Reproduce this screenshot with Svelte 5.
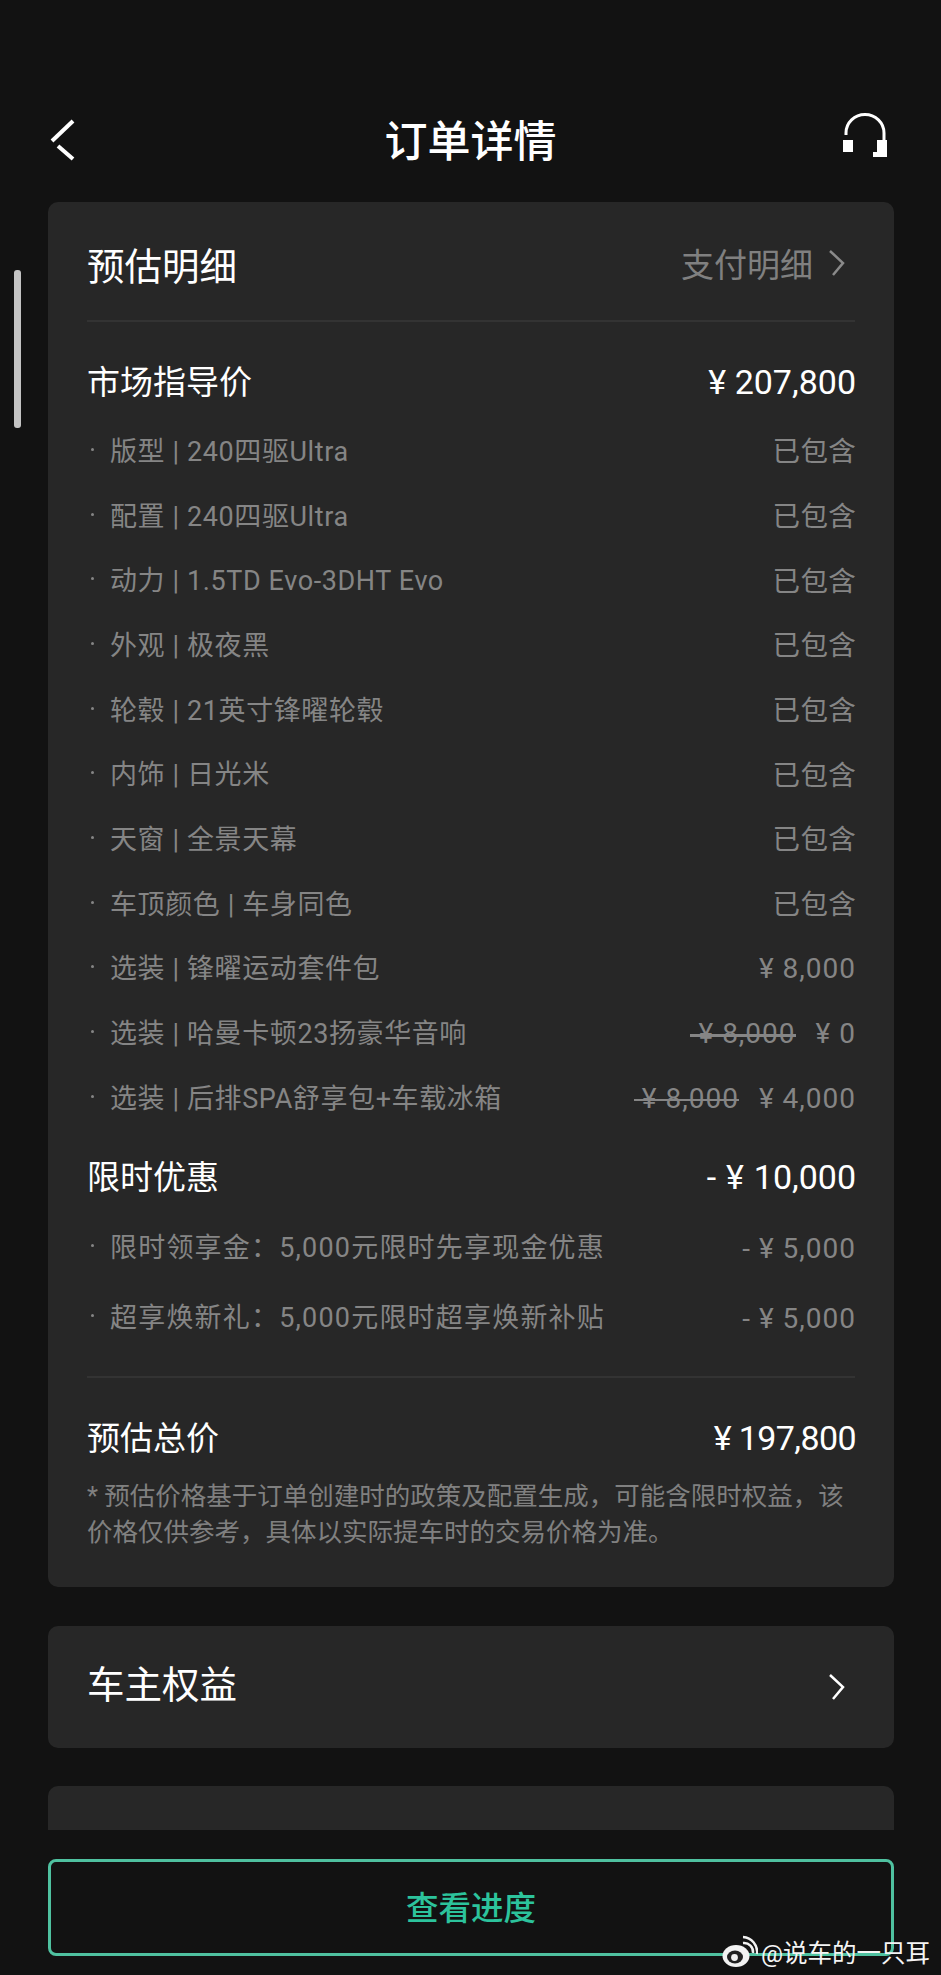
<script lang="ts">
  type Row = { label: string; old?: string; value: string };

  const specs: Row[] = [
    { label: '版型 | 240四驱Ultra', value: '已包含' },
    { label: '配置 | 240四驱Ultra', value: '已包含' },
    { label: '动力 | 1.5TD Evo-3DHT Evo', value: '已包含' },
    { label: '外观 | 极夜黑', value: '已包含' },
    { label: '轮毂 | 21英寸锋曜轮毂', value: '已包含' },
    { label: '内饰 | 日光米', value: '已包含' },
    { label: '天窗 | 全景天幕', value: '已包含' },
    { label: '车顶颜色 | 车身同色', value: '已包含' },
    { label: '选装 | 锋曜运动套件包', value: '¥ 8,000' },
    { label: '选装 | 哈曼卡顿23扬豪华音响', old: '¥ 8,000', value: '¥ 0' },
    { label: '选装 | 后排SPA舒享包+车载冰箱', old: '¥ 8,000', value: '¥ 4,000' },
  ];

  const offers: Row[] = [
    { label: '限时领享金：5,000元限时先享现金优惠', value: '- ¥ 5,000' },
    { label: '超享焕新礼：5,000元限时超享焕新补贴', value: '- ¥ 5,000' },
  ];
</script>

<div class="phone">
  <div class="scrollbar"></div>

  <header class="nav">
    <svg class="back" width="30" height="44" viewBox="0 0 30 44" fill="none" stroke="#fff" stroke-width="4">
      <path d="M25 3 L4 23" />
      <path d="M10 28 L25 41" />
    </svg>
    <h1>订单详情</h1>
    <svg class="support" width="44" height="44" viewBox="0 0 44 44" fill="none">
      <path d="M3 22 V20 A19 18.5 0 0 1 41 20 V30" stroke="#fff" stroke-width="3" />
      <path d="M0 27 H10 V39 H0 Z" fill="#fff" />
      <path d="M34 27 H44 V44 H30 V39 H34 Z" fill="#fff" />
    </svg>
  </header>

  <section class="card detail">
    <div class="card-head">
      <h2>预估明细</h2>
      <span class="link">
        支付明细
        <svg width="18" height="28" viewBox="0 0 18 28" fill="none" stroke="#8a8a8a" stroke-width="2.5"><path d="M2 2 L15 14 L5 26" /></svg>
      </span>
    </div>

    <div class="main-row first">
      <span>市场指导价</span>
      <span class="num">¥ 207,800</span>
    </div>
    {#each specs as row}
      <div class="row">
        <span class="label"><i></i>{row.label}</span>
        <span class={['right', { price: row.value !== '已包含' }]}>
          {#if row.old}<s>{row.old}</s>{/if}
          <span>{row.value}</span>
        </span>
      </div>
    {/each}

    <div class="main-row offer">
      <span>限时优惠</span>
      <span class="num gap">- ¥ 10,000</span>
    </div>
    {#each offers as row}
      <div class="row tall">
        <span class="label"><i></i>{row.label}</span>
        <span class="right price">{row.value}</span>
      </div>
    {/each}

    <div class="total">
      <div class="main-row">
        <span>预估总价</span>
        <span class="num tight">¥ 197,800</span>
      </div>
      <p class="note">* 预估价格基于订单创建时的政策及配置生成，可能含限时权益，该价格仅供参考，具体以实际提车时的交易价格为准。</p>
    </div>
  </section>

  <section class="card perks">
    <h2>车主权益</h2>
    <svg width="18" height="28" viewBox="0 0 18 28" fill="none" stroke="#fff" stroke-width="2.5"><path d="M2 2 L15 14 L5 26" /></svg>
  </section>

  <section class="card cut">
    <h2>车辆信息</h2>
  </section>

  <footer class="bottom">
    <button>查看进度</button>
  </footer>

  <div class="mark">
    <svg width="36" height="34" viewBox="0 0 36 34">
      <ellipse cx="14" cy="21" rx="13.5" ry="11" fill="#f2f2f2" />
      <ellipse cx="13" cy="22" rx="8" ry="6.5" fill="#222" />
      <circle cx="12.5" cy="22.5" r="3.4" fill="#f2f2f2" />
      <path d="M21 8 A9 9 0 0 1 31 18" fill="none" stroke="#f2f2f2" stroke-width="2.4" />
      <path d="M21 2 A15 15 0 0 1 35 19" fill="none" stroke="#f2f2f2" stroke-width="2.4" />
    </svg>
    <span>@说车的一只耳</span>
  </div>
</div>

<style>
  :global(body) {
    margin: 0;
    background: #121212;
  }
  .phone {
    position: relative;
    width: 941px;
    height: 1975px;
    overflow: hidden;
    background: #121212;
    color: #fff;
    font-family: Roboto, 'Noto Sans CJK SC', sans-serif;
  }
  .scrollbar {
    position: absolute;
    left: 14px;
    top: 270px;
    width: 7px;
    height: 158px;
    border-radius: 3px;
    background: #c4c4c4;
  }
  .nav {
    display: flex;
    align-items: center;
    justify-content: space-between;
    height: 80px;
    padding: 100px 54px 22px 48px;
    position: relative;
  }
  .nav h1 {
    position: absolute;
    left: 0;
    right: 0;
    margin: 0 0 5px;
    text-align: center;
    font-size: 43px;
    font-weight: 500;
  }
  .support {
    margin-bottom: 10px;
  }
  .card {
    margin: 0 47px 0 48px;
    background: #272727;
    border-radius: 10px;
  }
  .detail {
    height: 1385px;
    padding: 0 39px;
    box-sizing: border-box;
  }
  h2 {
    margin: 0;
    font-size: 37.5px;
    font-weight: 400;
  }
  .card-head {
    display: flex;
    align-items: center;
    justify-content: space-between;
    height: 114px;
    padding-top: 4px;
    border-bottom: 2px solid #333;
  }
  .link {
    display: flex;
    align-items: center;
    gap: 15px;
    padding-right: 9px;
    font-size: 33px;
    color: #808080;
  }
  .main-row {
    display: flex;
    align-items: center;
    justify-content: space-between;
    height: 46px;
    font-size: 33px;
  }
  .main-row.first {
    margin-top: 35px;
    margin-bottom: 14px;
  }
  .main-row.offer {
    margin-top: 23px;
    margin-bottom: 14px;
  }
  .num {
    margin-right: -1px;
    padding-top: 4px;
    font-size: 34px;
  }
  .num.gap {
    word-spacing: 1.5px;
  }
  .num.tight {
    letter-spacing: -0.6px;
  }
  .row {
    display: flex;
    align-items: center;
    justify-content: space-between;
    height: 64.7px;
    font-size: 27px;
    color: #858585;
  }
  .row.tall {
    height: 70px;
  }
  .row.tall .label {
    padding-bottom: 2px;
    letter-spacing: 1.2px;
  }
  .label {
    display: flex;
    align-items: center;
    white-space: pre;
    letter-spacing: 0.6px;
  }
  .label i {
    width: 3px;
    height: 3px;
    margin: 0 16px 0 4px;
    border-radius: 50%;
    background: #858585;
  }
  .right {
    display: flex;
    gap: 20px;
    margin-right: -1px;
    font-size: 27.5px;
    letter-spacing: 0.3px;
  }
  .right.price {
    padding-top: 4px;
    font-size: 28px;
    letter-spacing: 1px;
  }
  .right s {
    position: relative;
    text-decoration: none;
  }
  .right s::after {
    content: '';
    position: absolute;
    left: -8px;
    right: 0;
    top: 52%;
    height: 2.5px;
    background: #858585;
  }
  .total {
    margin-top: 24px;
    padding-top: 35px;
    border-top: 2px solid #333;
  }
  .note {
    margin: 19px 0 0;
    font-size: 25.5px;
    line-height: 36px;
    color: #808080;
  }
  .perks {
    display: flex;
    align-items: center;
    justify-content: space-between;
    height: 122px;
    margin-top: 39px;
    padding: 0 48px 0 39px;
  }
  .perks h2 {
    margin-bottom: 11px;
  }
  .cut {
    height: 122px;
    margin-top: 38px;
    padding: 33px 39px 0;
  }
  .bottom {
    position: absolute;
    left: 0;
    right: 0;
    top: 1830px;
    bottom: 0;
    padding: 29px 47px 0 48px;
    background: #121212;
  }
  .bottom button {
    display: block;
    width: 100%;
    height: 97px;
    padding: 0 0 4px;
    border: 3px solid #4fc1a0;
    border-radius: 8px;
    background: transparent;
    color: #2cc39c;
    font-family: inherit;
    font-size: 32.5px;
    font-weight: 500;
  }
  .mark {
    position: absolute;
    left: 722px;
    top: 1934px;
    display: flex;
    align-items: center;
    gap: 3px;
    font-size: 24.5px;
    color: #f4f4f4;
  }
</style>
